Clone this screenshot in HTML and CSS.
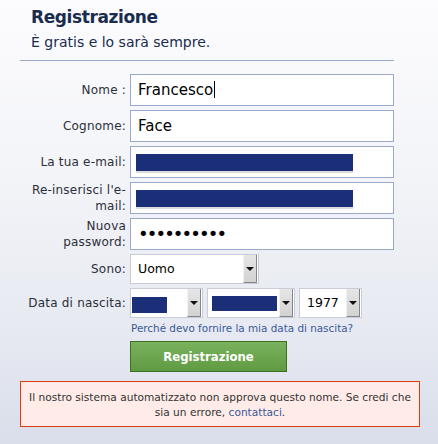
FILE: index.html
```html
<!DOCTYPE html>
<html lang="it">

<head>
    <meta charset="UTF-8">
    <title>Registrazione</title>
    <link rel="stylesheet" href="styles.css">
</head>

<body>
    <div class="page">
        <div class="head">
            <h2>Registrazione</h2>
            <p>È gratis e lo sarà sempre.</p>
        </div>

        <div class="form">
            <label>Nome :</label>
            <div class="field">Francesco<span class="caret"></span></div>

            <label>Cognome:</label>
            <div class="field">Face</div>

            <label>La tua e-mail:</label>
            <div class="field"><span class="hidden-mail"></span></div>

            <label>Re-inserisci l'e-<br>mail:</label>
            <div class="field"><span class="hidden-mail"></span></div>

            <label>Nuova<br>password:</label>
            <div class="field password">••••••••••</div>

            <label>Sono:</label>
            <div class="select sex">
                <span class="value">Uomo</span>
                <span class="arrow"></span>
            </div>

            <label>Data di nascita:</label>
            <div class="birthday">
                <div class="select day">
                    <span class="value"><span class="hidden-day"></span></span>
                    <span class="arrow"></span>
                </div>
                <div class="select month">
                    <span class="value"><span class="hidden-month"></span></span>
                    <span class="arrow"></span>
                </div>
                <div class="select year">
                    <span class="value">1977</span>
                    <span class="arrow"></span>
                </div>
            </div>

            <span></span>
            <a class="why" href="#">Perché devo fornire la mia data di nascita?</a>

            <span></span>
            <button id="submit">Registrazione</button>
        </div>

        <div class="error">
            Il nostro sistema automatizzato non approva questo nome. Se credi che sia un errore, <a href="#">contattaci</a>.
        </div>
    </div>
</body>

</html>
```

FILE: styles.css
```css
body {
    margin: 0;
    height: 444px;
    font-family: "DejaVu Sans", sans-serif;
    background: linear-gradient(#fcfcfe 0, #f3f4f8 40%, #e6e9f1 75%, #d9deea 100%);
}

.page {
    padding: 0 18px 0 20px;
}

.head {
    width: 363px;
    padding: 7px 0 9px 11px;
    border-bottom: 1px solid #97a9c9;
    color: #1a2c4e;
}

.head h2 {
    margin: 0;
    font-size: 17px;
    line-height: 20px;
    letter-spacing: -0.4px;
}

.head p {
    margin: 6px 0 0 0;
    font-size: 14px;
    line-height: 18px;
}

.form {
    margin-top: 13px;
    display: grid;
    grid-template-columns: 106px 264px;
    column-gap: 4px;
    row-gap: 4px;
}

.form label {
    align-self: center;
    text-align: right;
    font-size: 12px;
    letter-spacing: 0.2px;
    line-height: 16px;
    color: #2b2f3a;
}

.field {
    position: relative;
    height: 30px;
    border: 1px solid #98a9ca;
    background-color: #fff;
    padding-left: 7px;
    font-size: 15px;
    line-height: 30px;
    color: #000;
}

.caret {
    display: inline-block;
    width: 1px;
    height: 17px;
    margin-left: 1px;
    vertical-align: -3px;
    background-color: #000;
}

.hidden-mail {
    display: block;
    width: 217px;
    height: 17px;
    margin: 7px 0 0 -2px;
    background-color: #1b2f78;
    box-shadow: 0 2px 0 #dcdcdc;
}

.password {
    font-size: 18px;
    letter-spacing: -1.9px;
}

.select {
    display: flex;
    height: 28px;
    border: 1px solid #c9cdd8;
    background-color: #fff;
    font-size: 12.5px;
    line-height: 28px;
}

.select .value {
    flex: 1;
    padding-left: 7px;
}

.select .arrow {
    position: relative;
    width: 12px;
    margin: 0 1px 0 0;
    background: linear-gradient(#e6e6e6, #d2d2d2);
    border-left: 1px solid #f2f2f2;
    border-right: 1px solid #858585;
    border-bottom: 1px solid #858585;
}

.select .arrow::after {
    content: "";
    position: absolute;
    left: 2px;
    top: 12px;
    border-left: 4px solid transparent;
    border-right: 4px solid transparent;
    border-top: 4px solid #111;
}

.sex {
    width: 127px;
}

.birthday {
    display: flex;
    gap: 4px;
}

.day {
    width: 71px;
}

.day .value {
    padding-left: 1px;
}

.month {
    width: 86px;
}

.month .value {
    padding-left: 4px;
}

.year {
    width: 61px;
}

.hidden-day {
    display: block;
    width: 35px;
    height: 16px;
    margin-top: 8px;
    background-color: #1b2f78;
}

.hidden-month {
    display: block;
    width: 65px;
    height: 15px;
    margin-top: 7px;
    background-color: #1b2f78;
}

.why {
    margin-left: 1px;
    font-size: 10.4px;
    line-height: 12px;
    color: #3b5998;
    text-decoration: none;
}

#submit {
    width: 157px;
    height: 31px;
    margin-top: 3px;
    border: 1px solid #3d6f25;
    background: linear-gradient(#79b25d, #5f9b42);
    color: #fff;
    font-family: "DejaVu Sans", sans-serif;
    font-size: 11.7px;
    font-weight: bold;
    padding: 0;
}

.error {
    margin-top: 9px;
    width: 386px;
    border: 1px solid #dd3c10;
    background-color: #ffebe8;
    padding: 8px 6px 6px 6px;
    text-align: center;
    font-size: 10.6px;
    line-height: 15px;
    color: #333;
}

.error a {
    color: #3b5998;
    text-decoration: none;
}
```
